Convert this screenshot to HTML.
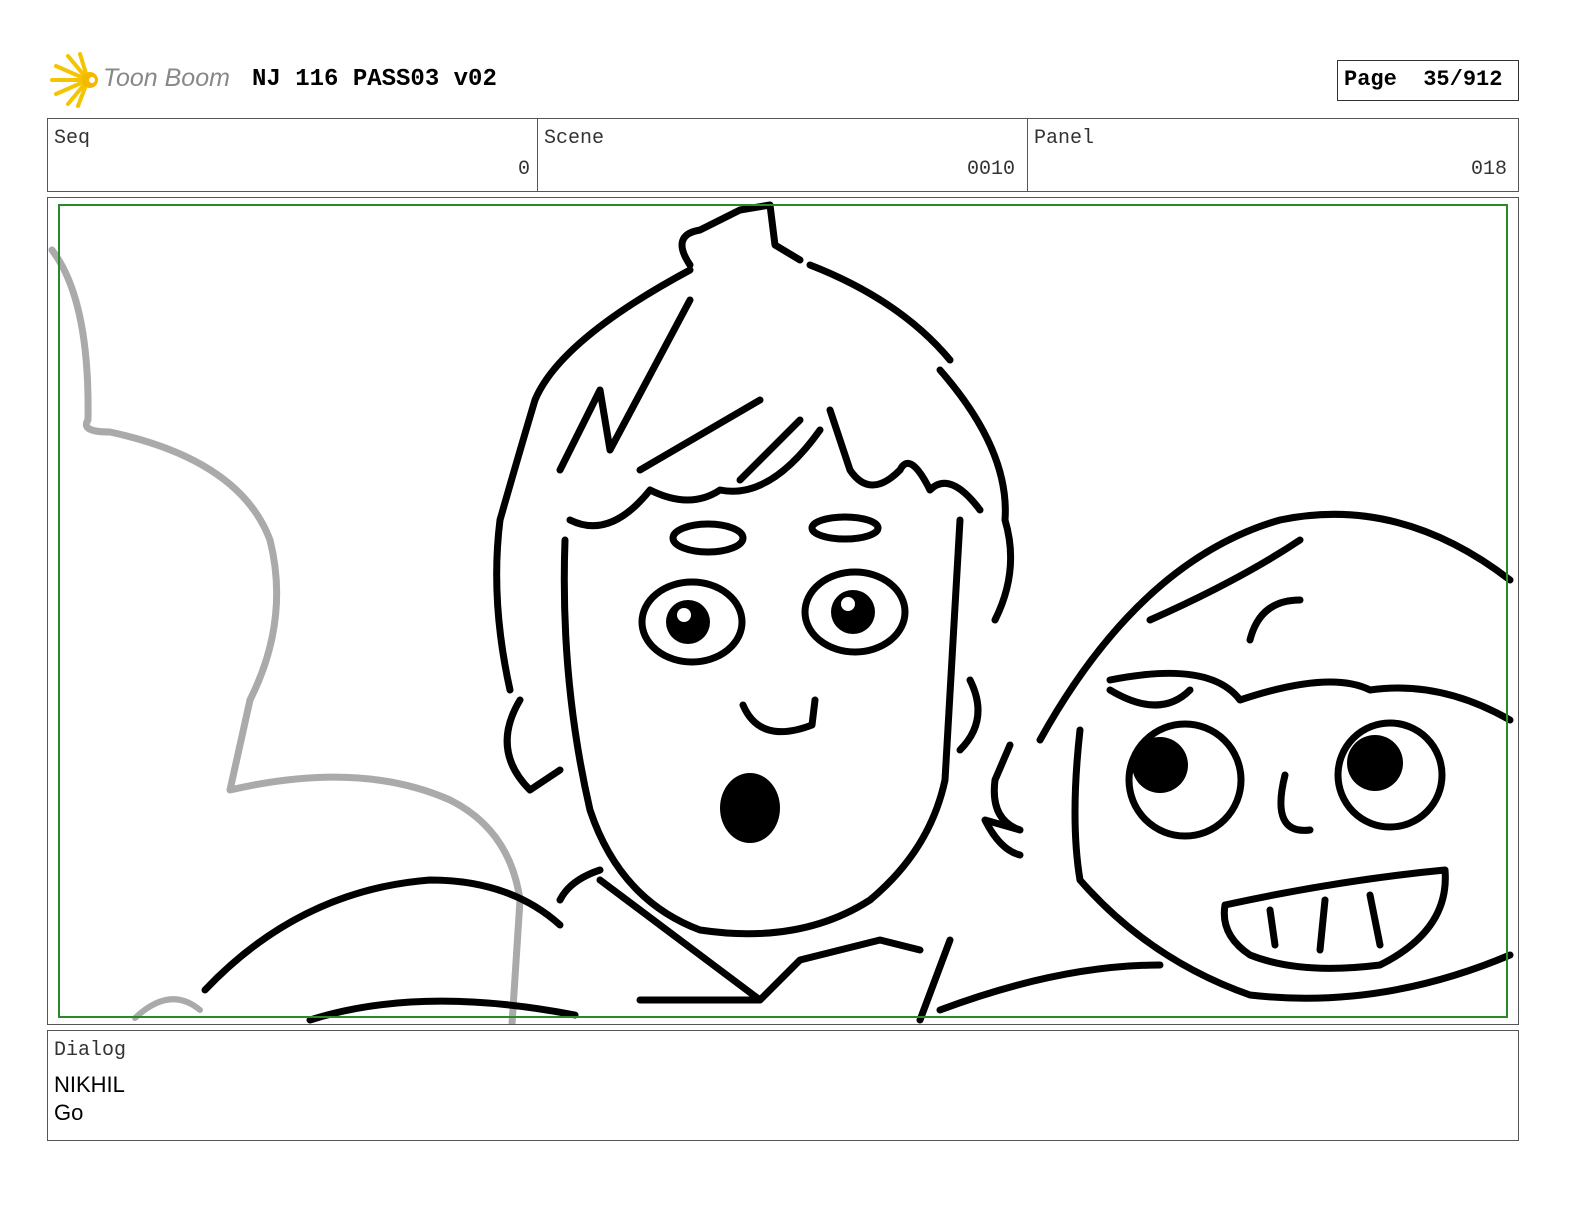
<!DOCTYPE html>
<html style="overflow:hidden"><head><meta charset="utf-8"><style>
html,body{margin:0;padding:0}
body{width:1584px;height:1224px;background:#fff;position:relative;font-family:"Liberation Mono",monospace;overflow:hidden}
.a{position:absolute}
.box{position:absolute;border:1px solid #555;box-sizing:border-box}
.lbl{font-size:20px;color:#333}
</style></head><body>
<svg class="a" style="left:48px;top:52px" width="56" height="56" viewBox="0 0 56 56">
<g stroke="#f5c400" stroke-width="4" stroke-linecap="round">
<line x1="40" y1="28" x2="4" y2="28"/><line x1="40" y1="28" x2="8" y2="14"/><line x1="40" y1="28" x2="8" y2="42"/><line x1="40" y1="28" x2="20" y2="4"/><line x1="40" y1="28" x2="20" y2="52"/><line x1="40" y1="28" x2="32" y2="2"/><line x1="40" y1="28" x2="30" y2="54"/></g>
<circle cx="42" cy="28" r="8" fill="#f5b800"/><circle cx="44" cy="28" r="3" fill="#fff"/></svg>
<div class="a" style="left:103px;top:64px;font-family:'Liberation Sans',sans-serif;font-style:italic;font-size:25px;color:#888">Toon Boom</div>
<div class="a" style="left:252px;top:66px;font-weight:bold;font-size:24px">NJ 116 PASS03 v02</div>
<div class="box" style="left:1337px;top:60px;width:182px;height:41px;border-color:#333"></div>
<div class="a" style="left:1344px;top:67px;font-weight:bold;font-size:22px">Page&nbsp;&nbsp;35/912</div>
<div class="box" style="left:47px;top:118px;width:1472px;height:74px"></div>
<div class="a" style="left:537px;top:118px;width:1px;height:74px;background:#555"></div>
<div class="a" style="left:1027px;top:118px;width:1px;height:74px;background:#555"></div>
<div class="a lbl" style="left:54px;top:127px">Seq</div>
<div class="a lbl" style="left:544px;top:127px">Scene</div>
<div class="a lbl" style="left:1034px;top:127px">Panel</div>
<div class="a lbl" style="left:518px;top:158px">0</div>
<div class="a lbl" style="left:967px;top:158px">0010</div>
<div class="a lbl" style="left:1471px;top:158px">018</div>
<div class="box" style="left:47px;top:197px;width:1472px;height:828px"></div>
<svg class="a" style="left:0;top:0" width="1584" height="1224">
<defs><clipPath id="c"><rect x="48" y="198" width="1470" height="826"/></clipPath></defs>
<g clip-path="url(#c)" fill="none" stroke-linecap="round" stroke-linejoin="round">
<path d="M52 250 Q90 300 88 420 Q80 432 110 432 Q240 460 270 540 Q290 620 250 700 L230 790 Q360 760 450 800 Q510 830 520 900 L512 1024" stroke="#aaa" stroke-width="7"/>
<path d="M135 1018 Q170 985 200 1010" stroke="#aaa" stroke-width="6"/>
<g stroke="#000" stroke-width="7">
<path d="M690 265 Q670 235 700 230 L740 210 L770 205 L775 245 L800 260 M810 265 Q900 300 950 360 M690 270 Q560 340 535 400 Q520 450 500 520 Q490 600 510 690 M940 370 Q1010 450 1005 520 Q1020 570 995 620"/>
<path d="M560 470 L600 390 L610 450 L690 300 M640 470 L760 400 M740 480 L800 420 M830 410 L850 470 Q870 500 900 470 Q910 450 930 490 Q950 470 980 510 M570 520 Q610 540 650 490 Q690 510 720 490 Q770 500 820 430"/>
<path d="M565 540 Q560 680 590 810 Q620 900 700 930 Q800 945 870 900 Q930 850 945 780 L960 520"/>
<path d="M520 700 Q490 750 530 790 L560 770 M970 680 Q990 720 960 750"/>
<ellipse cx="708" cy="538" rx="35" ry="14"/><ellipse cx="845" cy="528" rx="33" ry="11"/>
<ellipse cx="692" cy="622" rx="50" ry="40"/><ellipse cx="855" cy="612" rx="50" ry="40"/>
<path d="M743 705 Q760 745 812 725 L815 700"/>
<path d="M560 900 Q570 880 600 870 M600 880 L760 1000 L800 960 L880 940 L920 950 M760 1000 L640 1000"/>
<path d="M205 990 Q300 890 430 880 Q510 880 560 925 M310 1020 Q420 985 575 1015 M920 1020 L950 940 M940 1010 Q1060 965 1160 965"/>
<path d="M1040 740 Q1140 560 1280 520 Q1400 495 1510 580 M1150 620 Q1240 580 1300 540 M1250 640 Q1260 600 1300 600 M1110 680 Q1210 660 1240 700 Q1330 670 1370 690 Q1440 680 1510 720 M1110 690 Q1160 720 1190 690 M1010 745 L995 780 Q990 820 1020 830 L985 820 Q1000 850 1020 855 M1080 730 Q1070 820 1080 880 Q1150 960 1250 995 Q1380 1010 1510 955"/>
<circle cx="1185" cy="780" r="56"/><circle cx="1390" cy="775" r="52"/>
<path d="M1285 775 Q1270 835 1310 830 M1225 905 Q1340 880 1445 870 Q1450 930 1380 965 Q1300 975 1250 955 Q1220 935 1225 905 M1325 900 L1320 950 M1370 895 L1380 945 M1270 910 L1275 945"/>
</g>
<g fill="#000"><circle cx="688" cy="622" r="22"/><circle cx="853" cy="612" r="22"/><ellipse cx="750" cy="808" rx="30" ry="35"/><circle cx="1160" cy="765" r="28"/><circle cx="1375" cy="763" r="28"/></g>
<g fill="#fff"><circle cx="684" cy="615" r="7"/><circle cx="848" cy="604" r="7"/></g>
</g>
<rect x="59" y="205" width="1448" height="812" fill="none" stroke="#2a8a2a" stroke-width="2"/>
</svg>
<div class="box" style="left:47px;top:1030px;width:1472px;height:111px"></div>
<div class="a lbl" style="left:54px;top:1039px">Dialog</div>
<div class="a" style="left:54px;top:1071px;font-family:'Liberation Sans',sans-serif;font-size:22px;line-height:28px">NIKHIL<br>Go</div>
</body></html>
